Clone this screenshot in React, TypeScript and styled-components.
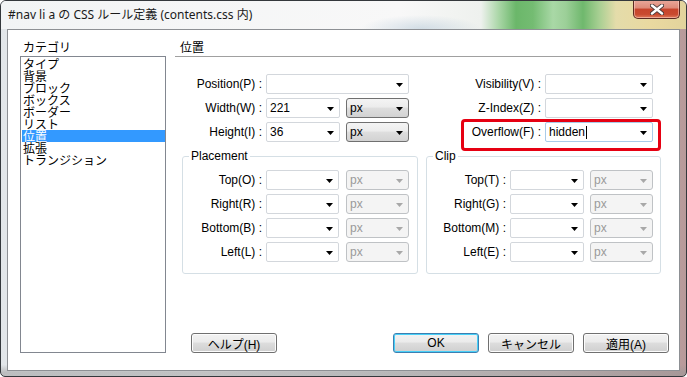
import React from 'react';
import styled, { createGlobalStyle } from 'styled-components';

const UI_FONT = `"Liberation Sans", "Noto Sans CJK JP", sans-serif`;
const JP_FONT = `"Noto Sans CJK JP", "Liberation Sans", sans-serif`;

const GlobalStyle = createGlobalStyle`
	html, body {
		margin: 0;
		padding: 0;
	}
	body {
		width: 687px;
		height: 377px;
		overflow: hidden;
		background: #fff;
		font-family: ${UI_FONT};
		font-size: 12px;
	}
	* {
		box-sizing: border-box;
	}
`;

interface FieldDef {
	label: string;
}

const categories = ['タイプ', '背景', 'ブロック', 'ボックス', 'ボーダー', 'リスト', '位置', '拡張', 'トランジション'];

const placement: FieldDef[] = [{ label: 'Top(O) :' }, { label: 'Right(R) :' }, { label: 'Bottom(B) :' }, { label: 'Left(L) :' }];
const clip: FieldDef[] = [{ label: 'Top(T) :' }, { label: 'Right(G) :' }, { label: 'Bottom(M) :' }, { label: 'Left(E) :' }];

function Arrow({ disabled }: { disabled?: boolean }) {
	return (
		<ArrowIcon width="7" height="4" viewBox="0 0 7 4">
			<path d="M0 0h7L3.5 4z" fill={disabled ? '#a8a8a8' : '#000'} />
		</ArrowIcon>
	);
}

function Combo({ width, value, focused, caret }: { width: number; value?: string; focused?: boolean; caret?: boolean }) {
	return (
		<ComboBox $width={width} $focused={focused}>
			<ComboText>
				{value}
				{caret && <Caret />}
			</ComboText>
			<Arrow />
		</ComboBox>
	);
}

function Unit({ disabled, gap }: { disabled?: boolean; gap: number }) {
	return (
		<UnitBox $disabled={disabled} $gap={gap}>
			<span>px</span>
			<Arrow disabled={disabled} />
		</UnitBox>
	);
}

function CloseGlyph() {
	return (
		<svg width="14" height="11" viewBox="0 0 14 11">
			<path d="M2 1.5L12 9.5M12 1.5L2 9.5" stroke="#4a3b3b" strokeWidth="4.2" strokeLinecap="round" />
			<path d="M2 1.5L12 9.5M12 1.5L2 9.5" stroke="#fff" strokeWidth="2.4" strokeLinecap="round" />
		</svg>
	);
}

export default function App() {
	return (
		<>
			<GlobalStyle />
			<Window>
				<TitleBar>
					<Title>#nav li a の CSS ルール定義 (contents.css 内)</Title>
					<CloseButton>
						<CloseGlyph />
					</CloseButton>
				</TitleBar>
				<Client>
					<LeftPane>
						<PaneLabel>カテゴリ</PaneLabel>
						<ListBox>
							{categories.map((c) => (
								<ListItem key={c} $selected={c === '位置'}>
									{c}
								</ListItem>
							))}
						</ListBox>
					</LeftPane>
					<RightPane>
						<SectionHeader>位置</SectionHeader>
						<Separator />
						<TopFields>
							<FieldColumn>
								<FieldRow>
									<Label $width={91}>Position(P) :</Label>
									<Combo width={143} />
								</FieldRow>
								<FieldRow>
									<Label $width={91}>Width(W) :</Label>
									<Combo width={74} value="221" />
									<Unit gap={6} />
								</FieldRow>
								<FieldRow>
									<Label $width={91}>Height(I) :</Label>
									<Combo width={74} value="36" />
									<Unit gap={6} />
								</FieldRow>
							</FieldColumn>
							<FieldColumn>
								<FieldRow>
									<Label $width={119}>Visibility(V) :</Label>
									<Combo width={108} />
								</FieldRow>
								<FieldRow>
									<Label $width={119}>Z-Index(Z) :</Label>
									<Combo width={108} />
								</FieldRow>
								<FieldRow>
									<Label $width={119}>Overflow(F) :</Label>
									<Combo width={108} value="hidden" focused caret />
									<Highlight />
								</FieldRow>
							</FieldColumn>
						</TopFields>
						<GroupsRow>
							<Group $width={236}>
								<Legend>Placement</Legend>
								{placement.map((f) => (
									<FieldRow key={f.label}>
										<Label $width={83}>{f.label}</Label>
										<Combo width={73} />
										<Unit disabled gap={7} />
									</FieldRow>
								))}
							</Group>
							<Group $width={235}>
								<Legend>Clip</Legend>
								{clip.map((f) => (
									<FieldRow key={f.label}>
										<Label $width={83}>{f.label}</Label>
										<Combo width={74} />
										<Unit disabled gap={6} />
									</FieldRow>
								))}
							</Group>
						</GroupsRow>
						<ButtonBar>
							<Button>ヘルプ(H)</Button>
							<Spacer />
							<Button $default>OK</Button>
							<Button>キャンセル</Button>
							<Button>適用(A)</Button>
						</ButtonBar>
					</RightPane>
				</Client>
			</Window>
		</>
	);
}

const Window = styled.div`
	width: 687px;
	height: 377px;
	display: flex;
	flex-direction: column;
	border: 1px solid #34383c;
	border-radius: 6px 6px 5px 5px;
	overflow: hidden;
	background:
		linear-gradient(180deg, rgba(255, 255, 255, 0) 97%, rgba(150, 150, 150, 0.5) 99%),
		linear-gradient(90deg, #e2e6e9 0%, #eceef0 30%, #d9dadc 55%, #cdbcbc 80%, #b89a9a 100%);
`;
const TitleBar = styled.div`
	height: 28px;
	flex: none;
	display: flex;
	align-items: flex-start;
	justify-content: space-between;
	padding-left: 7px;
	background:
		radial-gradient(ellipse 60px 14px at 420px 28px, rgba(180, 200, 215, 0.55), rgba(180, 200, 215, 0) 100%),
		linear-gradient(
			90deg,
			#f2f4f5 0px,
			#f8f8f8 400px,
			#eef1ee 480px,
			#a9d6a6 498px,
			#6bb76a 515px,
			#74bc72 532px,
			#a9d8a6 552px,
			#9ccf98 565px,
			#6fb86d 582px,
			#a7cf92 598px,
			#e4dcaa 615px,
			#ead9a0 650px,
			#e2d39c 687px
		);
`;
const Title = styled.div`
	line-height: 28px;
	font-family: "Noto Sans", "Noto Sans CJK JP", sans-serif;
	font-size: 12px;
	color: #1a1a1a;
	white-space: nowrap;
`;
const CloseButton = styled.div`
	width: 47px;
	height: 19px;
	margin-right: 6px;
	margin-top: -1px;
	display: flex;
	align-items: center;
	justify-content: center;
	border: 1px solid #5b2a22;
	border-top: none;
	border-radius: 0 0 5px 5px;
	background: linear-gradient(#e9a99c 0%, #dd8a78 45%, #c7442c 50%, #c94a30 80%, #e07a5c 100%);
	box-shadow: inset 0 0 0 1px rgba(255, 220, 210, 0.5);
`;
const Client = styled.div`
	flex: 1;
	margin: 0 6px 5px 6px;
	border: 1px solid #8d9094;
	background: #fff;
	display: grid;
	grid-template-columns: 146px 496px;
	column-gap: 9px;
	padding: 0 8px 0 12px;
`;
const LeftPane = styled.div`
	display: flex;
	flex-direction: column;
`;
const PaneLabel = styled.div`
	height: 26px;
	display: flex;
	align-items: flex-end;
	padding: 0 0 2px 3px;
	font-family: ${JP_FONT};
	font-size: 12px;
	line-height: 14px;
	color: #000;
`;
const ListBox = styled.div`
	width: 146px;
	height: 297px;
	border: 1px solid #828790;
	padding: 1px 0 0 1px;
`;
const ListItem = styled.div<{ $selected?: boolean }>`
	height: 12px;
	line-height: 12px;
	padding-left: 1px;
	font-family: ${JP_FONT};
	font-size: 12px;
	white-space: nowrap;
	color: ${({ $selected }) => ($selected ? '#fff' : '#000')};
	background: ${({ $selected }) => ($selected ? '#3399ff' : 'transparent')};
`;
const RightPane = styled.div`
	display: flex;
	flex-direction: column;
`;
const SectionHeader = styled(PaneLabel)`
	padding-left: 5px;
`;
const Separator = styled.div`
	height: 1px;
	background: #a0a0a0;
`;
const TopFields = styled.div`
	display: grid;
	grid-template-columns: 251px 234px;
	margin-top: 17px;
`;
const FieldColumn = styled.div`
	display: flex;
	flex-direction: column;
	gap: 4px;
`;
const FieldRow = styled.div`
	position: relative;
	height: 20px;
	display: flex;
	align-items: center;
`;
const Label = styled.div<{ $width: number }>`
	width: ${({ $width }) => $width}px;
	flex: none;
	padding-right: 4px;
	text-align: right;
	white-space: nowrap;
	color: #000;
`;
const ComboBox = styled.div<{ $width: number; $focused?: boolean }>`
	width: ${({ $width }) => $width}px;
	height: 20px;
	flex: none;
	display: flex;
	align-items: center;
	padding: 0 5px 0 3px;
	background: #fff;
	border: 1px solid ${({ $focused }) => ($focused ? '#a9cbe8' : '#d3d7dc')};
	border-radius: 2px;
`;
const ComboText = styled.div`
	flex: 1;
	display: flex;
	align-items: center;
	color: #000;
	white-space: nowrap;
`;
const Caret = styled.span`
	display: inline-block;
	width: 1px;
	height: 13px;
	margin-left: 1px;
	background: #000;
`;
const ArrowIcon = styled.svg`
	flex: none;
	margin-top: 1px;
`;
const UnitBox = styled.div<{ $disabled?: boolean; $gap: number }>`
	width: 63px;
	height: 20px;
	flex: none;
	margin-left: ${({ $gap }) => $gap}px;
	display: flex;
	align-items: center;
	justify-content: space-between;
	padding: 0 5px 0 3px;
	border-radius: 3px;
	color: ${({ $disabled }) => ($disabled ? '#9a9a9a' : '#000')};
	border: 1px solid ${({ $disabled }) => ($disabled ? '#bfc2c5' : '#707070')};
	background: ${({ $disabled }) =>
		$disabled ? '#f4f4f4' : 'linear-gradient(#f4f4f4 0%, #ececec 45%, #dedede 50%, #d2d2d2 100%)'};
`;
const Highlight = styled.div`
	position: absolute;
	left: 35px;
	top: -3px;
	width: 200px;
	height: 32px;
	border: 3px solid #e60012;
	border-radius: 4px;
	pointer-events: none;
`;
const GroupsRow = styled.div`
	display: flex;
	gap: 8px;
	margin-top: 14px;
	padding-left: 7px;
`;
const Group = styled.div<{ $width: number }>`
	position: relative;
	width: ${({ $width }) => $width}px;
	height: 118px;
	display: flex;
	flex-direction: column;
	gap: 4px;
	padding-top: 13px;
	border: 1px solid #d5dfe5;
	border-radius: 3px;
`;
const Legend = styled.span`
	position: absolute;
	left: 6px;
	top: -8px;
	padding: 0 2px;
	line-height: 14px;
	background: #fff;
	color: #000;
`;
const ButtonBar = styled.div`
	margin-top: auto;
	margin-bottom: 17px;
	display: flex;
	gap: 9px;
	padding: 0 2px 0 16px;
`;
const Spacer = styled.div`
	flex: 1;
`;
const Button = styled.div<{ $default?: boolean }>`
	width: 86px;
	height: 20px;
	display: flex;
	align-items: center;
	justify-content: center;
	font-family: ${UI_FONT};
	font-size: 12px;
	color: #000;
	border-radius: 3px;
	border: 1px solid ${({ $default }) => ($default ? '#3c7fb1' : '#707070')};
	background: linear-gradient(#f2f2f2 0%, #ebebeb 45%, #dddddd 50%, #cfcfcf 100%);
	box-shadow: ${({ $default }) => ($default ? 'inset 0 0 0 1px #48d0f8' : 'inset 0 0 0 1px #fcfcfc')};
`;
